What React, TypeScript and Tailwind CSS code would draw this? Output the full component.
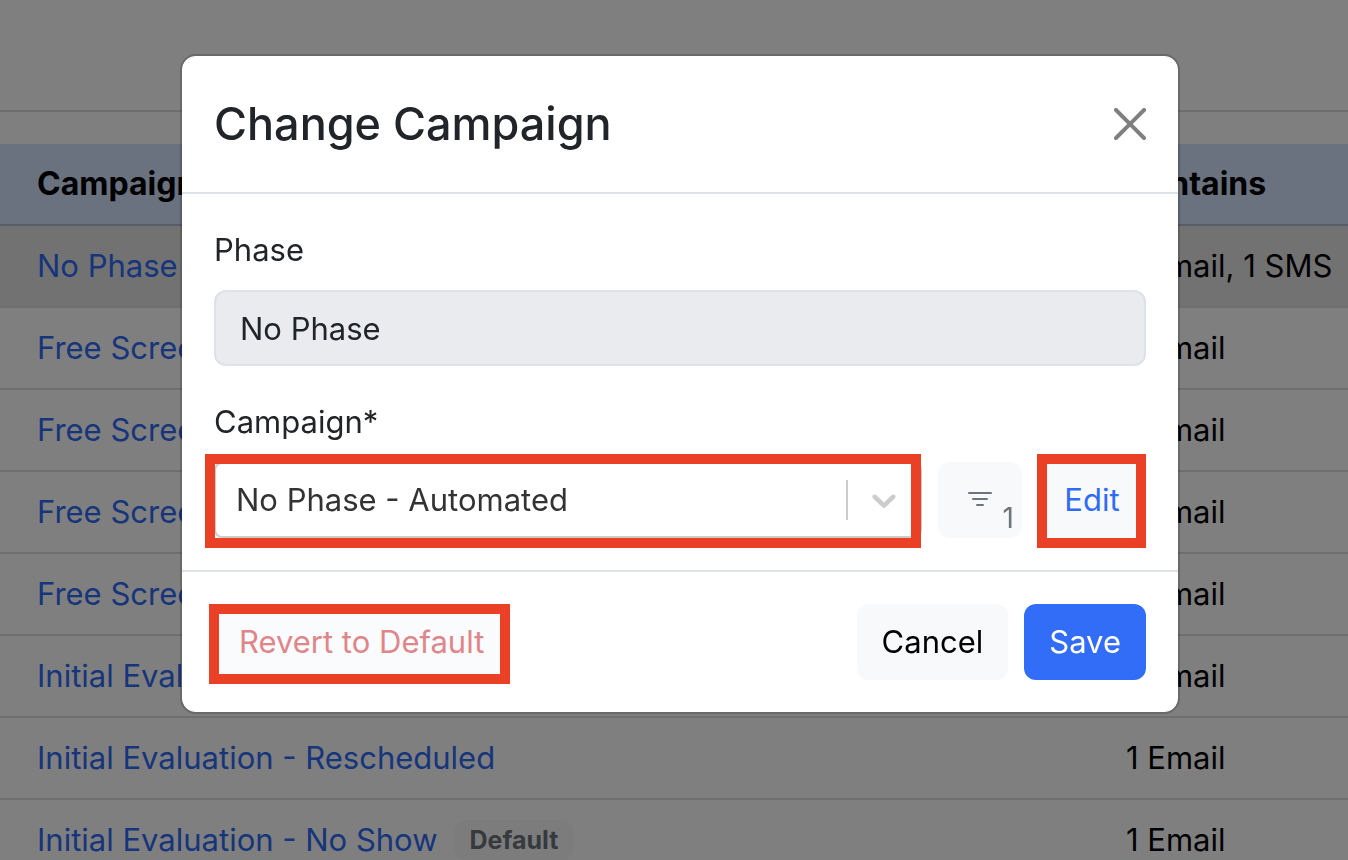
import { useState } from 'react';

type Row = {
  name: string;
  contains: string;
  isDefault?: boolean;
};

const ROWS: Row[] = [
  { name: 'No Phase', contains: '1 Email, 1 SMS' },
  { name: 'Free Screen', contains: '1 Email' },
  { name: 'Free Screen', contains: '1 Email' },
  { name: 'Free Screen', contains: '1 Email' },
  { name: 'Free Screen', contains: '1 Email' },
  { name: 'Initial Evaluation', contains: '1 Email' },
  { name: 'Initial Evaluation - Rescheduled', contains: '1 Email' },
  { name: 'Initial Evaluation - No Show', contains: '1 Email', isDefault: true },
];

const CAMPAIGNS = ['No Phase - Automated', 'No Phase - Manual'];

function CloseIcon() {
  return (
    <svg className="size-8" viewBox="0 0 16 16" fill="currentColor" aria-hidden="true">
      <path d="M.293.293a1 1 0 0 1 1.414 0L8 6.586 14.293.293a1 1 0 1 1 1.414 1.414L9.414 8l6.293 6.293a1 1 0 0 1-1.414 1.414L8 9.414l-6.293 6.293a1 1 0 0 1-1.414-1.414L6.586 8 .293 1.707a1 1 0 0 1 0-1.414z" />
    </svg>
  );
}

function ChevronIcon() {
  return (
    <svg className="size-10" viewBox="0 0 20 20" fill="currentColor" aria-hidden="true">
      <path d="M4.516 7.548c0.436-0.446 1.043-0.481 1.576 0l3.908 3.747 3.908-3.747c0.533-0.481 1.141-0.446 1.574 0 0.436 0.445 0.408 1.197 0 1.615-0.406 0.418-4.695 4.502-4.695 4.502-0.217 0.223-0.502 0.335-0.787 0.335s-0.57-0.112-0.789-0.335c0 0-4.287-4.084-4.695-4.502s-0.436-1.17 0-1.615z" />
    </svg>
  );
}

function FilterIcon() {
  return (
    <svg className="size-8" viewBox="0 0 16 16" fill="currentColor" aria-hidden="true">
      <path d="M6 10.5a.5.5 0 0 1 .5-.5h3a.5.5 0 0 1 0 1h-3a.5.5 0 0 1-.5-.5m-2-3a.5.5 0 0 1 .5-.5h7a.5.5 0 0 1 0 1h-7a.5.5 0 0 1-.5-.5m-2-3a.5.5 0 0 1 .5-.5h11a.5.5 0 0 1 0 1h-11a.5.5 0 0 1-.5-.5" />
    </svg>
  );
}

function CampaignTable() {
  return (
    <table className="w-full table-fixed border-collapse text-left whitespace-nowrap text-black">
      <thead>
        <tr className="h-[81px] border-b-2 border-[#b0bbd2] bg-[#d4e2fe] text-[32px]">
          <th className="pl-[37px] font-bold">Campaign</th>
          <th className="w-[238px] pl-4 font-bold">Contains</th>
        </tr>
      </thead>
      <tbody>
        {ROWS.map((row, i) => (
          <tr
            key={i}
            className={`h-[82px] border-b-2 border-[#dedede] ${i === 0 ? 'bg-[#e4e4e4]' : ''}`}
          >
            <td className="pl-[37px]">
              <div className="flex items-center gap-4">
                <a href="#" className="text-[#2f6bf5]">
                  {row.name}
                </a>
                {row.isDefault && (
                  <span className="rounded-xl bg-[#f8f9fa] px-4 py-2 text-[25px] leading-6 font-bold text-[#6c757d]">
                    Default
                  </span>
                )}
              </div>
            </td>
            <td className="pl-4">{row.contains}</td>
          </tr>
        ))}
      </tbody>
    </table>
  );
}

export default function App() {
  const [campaign, setCampaign] = useState(CAMPAIGNS[0]);

  return (
    <div className="h-screen overflow-hidden bg-white font-['Inter',sans-serif] text-[31px] leading-[48px] text-[#212529]">
      <div className="mb-8 h-28 border-b-2 border-[#dadada]" />
      <CampaignTable />

      {/* Backdrop + dialog */}
      <div className="fixed inset-0 overflow-hidden bg-black/50 pt-[54px] pl-3">
        <div
          role="dialog"
          aria-modal="true"
          aria-labelledby="dialog-title"
          className="mx-auto max-w-[1000px] rounded-2xl border-2 border-black/[0.175] bg-white bg-clip-padding"
        >
          <div className="flex items-center justify-between border-b-2 border-[#dee2e6] p-8">
            <h2 id="dialog-title" className="text-[45px] leading-[72px] font-medium">
              Change Campaign
            </h2>
            <button type="button" aria-label="Close" className="text-black/50">
              <CloseIcon />
            </button>
          </div>

          <div className="flex flex-col gap-8 p-8">
            <div className="flex flex-col gap-4">
              <label htmlFor="phase">Phase</label>
              <input
                id="phase"
                readOnly
                value="No Phase"
                className="h-[76px] w-full rounded-xl border-2 border-[#dee2e6] bg-[#eaebef] px-6"
              />
            </div>

            <div className="flex flex-col gap-4">
              <label htmlFor="campaign">Campaign*</label>
              <div className="flex gap-4">
                <div className="relative flex-1">
                  <select
                    id="campaign"
                    value={campaign}
                    onChange={(e) => setCampaign(e.target.value)}
                    className="h-[76px] w-full appearance-none rounded-lg border-2 border-[#ccc] bg-white px-5 text-[#333]"
                  >
                    {CAMPAIGNS.map((name) => (
                      <option key={name}>{name}</option>
                    ))}
                  </select>
                  <div className="pointer-events-none absolute inset-y-0 right-0 flex items-center gap-4 pr-[18px] text-[#ccc]">
                    <span className="h-10 w-0.5 bg-[#ccc]" />
                    <ChevronIcon />
                  </div>
                  <div className="pointer-events-none absolute -top-2 right-px -bottom-2.5 -left-[9px] border-10 border-[#ea4026]" />
                </div>
                <button
                  type="button"
                  aria-label="Filters"
                  className="relative flex w-[84px] items-center justify-center rounded-xl bg-[#f8f9fb] text-[#6c757d]"
                >
                  <FilterIcon />
                  <span className="absolute right-2 bottom-1 text-[28px] leading-8">1</span>
                </button>
                <button type="button" className="relative w-[108px] rounded-xl bg-[#f8f9fb] text-[#2f6bf5]">
                  Edit
                  <span className="pointer-events-none absolute -top-2 right-0 -bottom-2.5 -left-px border-10 border-[#ea4026]" />
                </button>
              </div>
            </div>
          </div>

          <div className="flex gap-4 border-t-2 border-[#dee2e6] p-8">
            <button
              type="button"
              className="relative mr-auto h-[76px] rounded-xl bg-[#fafbfd] px-[25px] text-[#de868a]"
            >
              Revert to Default
              <span className="pointer-events-none absolute top-0 -right-px -bottom-1 -left-[5px] border-10 border-[#ea4026]" />
            </button>
            <button type="button" className="h-[76px] rounded-xl bg-[#f8f9fb] px-[25px] text-black">
              Cancel
            </button>
            <button type="button" className="h-[76px] rounded-xl bg-[#316df6] px-[25px] text-white">
              Save
            </button>
          </div>
        </div>
      </div>
    </div>
  );
}
